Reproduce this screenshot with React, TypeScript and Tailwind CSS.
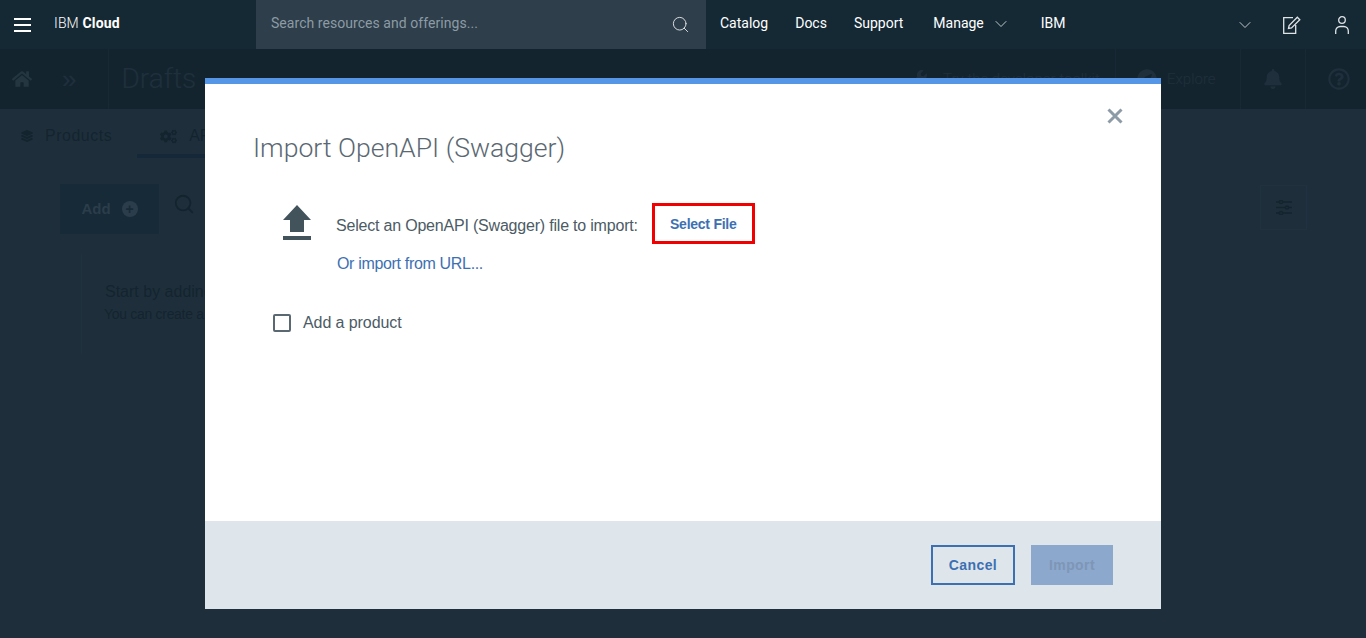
import React from "react";
import { ChevronDown, Search } from "lucide-react";
import { FaBell, FaCogs, FaCompass, FaHome, FaLayerGroup, FaRegQuestionCircle, FaWrench } from "react-icons/fa";

const plex = "font-['Roboto',sans-serif]";
const helv = "font-['Liberation_Sans',Arial,sans-serif]";

function TopNav() {
  return (
    <header className={`flex h-[49px] items-center bg-[#152935] text-[14px] text-white ${plex}`}>
      <div className="flex w-[256px] items-center">
        <svg className="ml-[14px] h-[14px] w-[17px]" viewBox="0 0 17 14" fill="#ffffff">
          <rect y="0" width="17" height="2" />
          <rect y="6" width="17" height="2" />
          <rect y="12" width="17" height="2" />
        </svg>
        <span className="ml-[23px] pb-[2px] text-[14px] tracking-[0.15px]">
          <span className="font-light">IBM</span> <b className="font-bold">Cloud</b>
        </span>
      </div>
      <div className="flex h-full w-[450px] items-center justify-between bg-[#2e3e4a] pl-[15px] pr-[16px]">
        <span className="pb-[3px] text-[14px] tracking-[0.05px] text-[#8c9ba5]">Search resources and offerings...</span>
        <Search className="h-[19px] w-[19px] text-[#dfe3e6]" strokeWidth={1.2} />
      </div>
      <nav className="ml-[14px] flex items-center pb-[2px] text-[14px]">
        <span>Catalog</span>
        <span className="ml-[27px]">Docs</span>
        <span className="ml-[27px]">Support</span>
        <span className="ml-[30px]">Manage</span>
        <ChevronDown className="ml-[7px] h-5 w-5 text-[#dfe3e6]" strokeWidth={1} />
        <span className="ml-[30px]">IBM</span>
      </nav>
      <div className="ml-auto flex items-center pr-[17px]">
        <ChevronDown className="h-5 w-5 text-[#dfe3e6]" strokeWidth={1} />
        <svg className="ml-[28px] h-[18px] w-[18px]" viewBox="0 0 18 18" fill="none" stroke="#dfe3e6" strokeWidth="1.3">
          <path d="M10 1.6H.7v15.7h12V9" />
          <path d="M5.5 12.5l.6-3L14.3 1.2l2.5 2.5-8.3 8.2z" />
        </svg>
        <svg className="ml-[34px] h-[18px] w-[14px]" viewBox="0 0 14 18" fill="none" stroke="#dfe3e6" strokeWidth="1.3">
          <circle cx="7" cy="4" r="3.3" />
          <path d="M.7 18v-3a4.5 4.5 0 0 1 4.5-4.5h3.6a4.5 4.5 0 0 1 4.5 4.5v3" />
        </svg>
      </div>
    </header>
  );
}

function DimmedPage() {
  return (
    <div className={`flex h-[589px] flex-col bg-[#1e2f3b] ${helv}`}>
      <div className="flex h-[60px] items-center bg-[#14242f] text-[#1f303c]">
        <FaHome className="ml-[12px] h-5 w-5 text-[#24363f]" />
        <span className="ml-[30px] text-[26px]">»</span>
        <span className="ml-[32px] h-full w-px bg-[#182834]" />
        <span className={`ml-[12px] text-[28px] font-light ${plex}`}>Drafts</span>
        <div className={`ml-auto flex h-full items-center font-light ${plex}`}>
          <FaWrench className="h-[18px] w-[18px]" />
          <span className="ml-[16px] w-[172px] text-[15px]">Try the developer toolkit</span>
          <span className="h-full w-px bg-[#182834]" />
          <FaCompass className="ml-[21px] h-5 w-5" />
          <span className="ml-[10px] w-[73px] text-[15px]">Explore</span>
          <span className="h-full w-px bg-[#182834]" />
          <FaBell className="ml-[22px] h-5 w-5" />
          <span className="ml-[22px] h-full w-px bg-[#182834]" />
          <FaRegQuestionCircle className="ml-[22px] mr-[16px] h-[22px] w-[22px]" />
        </div>
      </div>
      <div className="flex h-[49px] pl-[21px] text-[16px] text-[#14242f]">
        <div className="flex items-center pt-[5px] tracking-[0.5px]">
          <FaLayerGroup className="h-3 w-3" />
          <span className="ml-[12px]">Products</span>
        </div>
        <div className="ml-[25px] flex h-full items-center border-b-4 border-[#14283a] pl-[23px] pr-[20px] pt-[9px]">
          <FaCogs className="h-[17px] w-[17px]" />
          <span className="ml-[12px]">APIs</span>
        </div>
      </div>
      <div className="flex items-start pl-[60px] pt-[26px]">
        <div className="flex h-[50px] w-[99px] items-center justify-center gap-[11px] bg-[#172a38] text-[15px] font-bold text-[#2b3d4a]">
          Add
          <span className="flex h-4 w-4 items-center justify-center rounded-full bg-[#2b3d4a] text-[14px] leading-none text-[#172a38]">+</span>
        </div>
        <Search className="ml-[14px] mt-[9px] h-[22px] w-[22px] text-[#14242f]" />
      </div>
      <div className="ml-[81px] mt-[20px] h-[100px] w-[300px] border-l border-[#203240] pl-[23px] pt-[28px] text-[#14242f]">
        <p className="text-[16px] leading-[20px]">Start by adding</p>
        <p className="mt-[3px] -ml-px text-[14px] leading-[18px] tracking-[-0.3px]">You can create a</p>
      </div>
      <div className="absolute left-[1260px] top-[185px] flex h-[45px] w-[47px] items-center justify-center border border-[#203240]">
        <svg className="h-[15px] w-4" viewBox="0 0 16 15" stroke="#14242f" fill="#1e2f3b" strokeWidth="1.5">
          <path d="M0 2h16M0 7.5h16M0 13h16" />
          <circle cx="5" cy="2" r="1.6" />
          <circle cx="11" cy="7.5" r="1.6" />
          <circle cx="5" cy="13" r="1.6" />
        </svg>
      </div>
    </div>
  );
}

function ImportDialog() {
  return (
    <div className={`absolute left-[205px] top-[78px] flex h-[531px] w-[956px] flex-col border-t-[6px] border-[#5596e6] bg-white ${helv}`}>
      <div className="relative flex-1 pl-[48px] pt-[48px]">
        <svg className="absolute right-[36px] top-[22px] h-5 w-5" viewBox="0 0 20 20" stroke="#8c9ba5" strokeWidth="3">
          <path d="M3.5 3.5l13 13M16.5 3.5l-13 13" />
        </svg>
        <h2 className={`text-[26.6px] font-light leading-[32px] text-[#5a6872] ${plex}`}>Import OpenAPI (Swagger)</h2>
        <div className="ml-[30px] mt-[39px] flex items-start">
          <svg className="mt-[2px] h-[35px] w-[28px]" viewBox="0 0 28 35" fill="#42535c">
            <path d="M14 0 28 15H21V27H7V15H0Z" />
            <rect x="0" y="31" width="28" height="4" />
          </svg>
          <span className="ml-[25px] mt-[13px] text-[16px] leading-[20px] tracking-[-0.2px] text-[#4c5b65]">Select an OpenAPI (Swagger) file to import:</span>
          <button type="button" className="ml-[14px] flex h-[41px] w-[103px] items-center justify-center border-[3px] border-[#f00000] pt-[1px] text-[14px] font-bold tracking-[-0.25px] text-[#3d70b2]">
            Select File
          </button>
        </div>
        <a className="ml-[84px] mt-[10px] block text-[16px] leading-[20px] tracking-[-0.33px] text-[#3d70b2]">Or import from URL...</a>
        <label className="ml-[20px] mt-[39px] flex items-center">
          <span className="h-[18px] w-[18px] rounded-[2px] border-2 border-[#5a6872]" />
          <span className="ml-[12px] text-[16px] leading-[20px] tracking-[-0.08px] text-[#4c5b65]">Add a product</span>
        </label>
      </div>
      <div className="flex h-[88px] items-center justify-end gap-[16px] bg-[#dfe6eb] pr-[48px]">
        <button type="button" className="h-10 w-[84px] border-2 border-[#3d70b2] text-[14px] font-bold tracking-[0.4px] text-[#3d70b2]">
          Cancel
        </button>
        <button type="button" className="h-10 w-[82px] bg-[#8ca8cd] text-[14px] font-bold tracking-[0.4px] text-[#7e96b6]">
          Import
        </button>
      </div>
    </div>
  );
}

export default function App() {
  return (
    <div className="relative h-[638px] w-[1366px] overflow-hidden">
      <TopNav />
      <DimmedPage />
      <ImportDialog />
    </div>
  );
}
